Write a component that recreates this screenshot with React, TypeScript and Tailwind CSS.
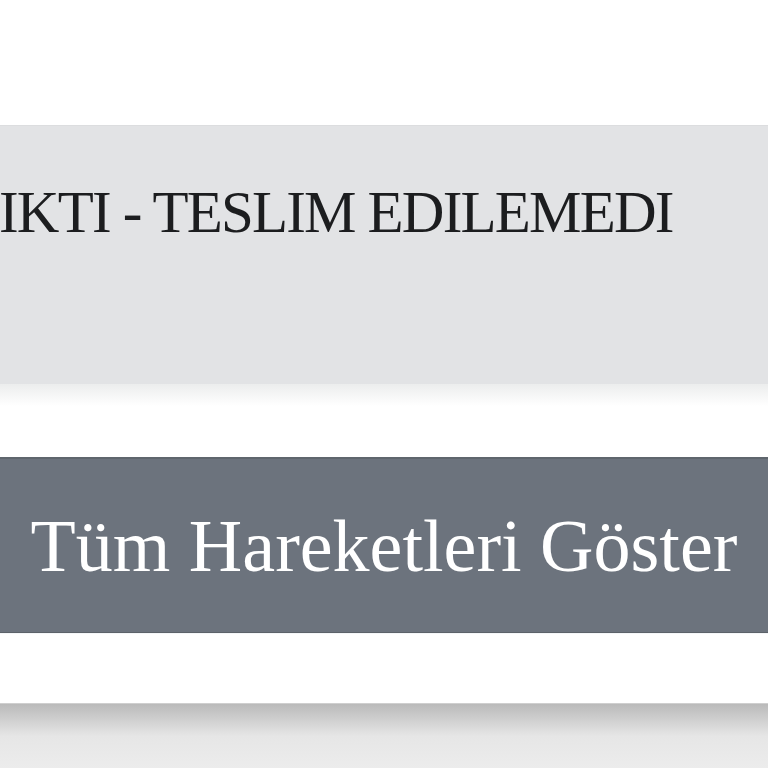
export default function App() {
  return (
    <div className="w-full h-[768px] overflow-hidden bg-white font-['Liberation_Serif',serif]">
      <div className="h-[125px]" />

      {/* Status box */}
      <div className="h-[259px] bg-[#e2e3e5] border-t border-[#dcdddf] pt-[57px] overflow-hidden whitespace-nowrap">
        <p className="text-[59px] leading-none tracking-[-1.8px] text-[#1c1d1f] -ml-[1px]">IKTI - TESLIM EDILEMEDI</p>
      </div>
      <div className="h-[22px] bg-gradient-to-b from-[#eceded] to-white" />

      <div className="h-[51px]" />

      {/* Button */}
      <button className="w-full h-[176px] flex items-center justify-center bg-[#6c737d] border-t-2 border-b border-t-[#5f666d] border-b-[#5c6269] text-white text-[74px] leading-none whitespace-nowrap">
        Tüm Hareketleri Göster
      </button>

      <div className="h-[70px] bg-white border-t border-[#f4f6f8]" />

      {/* Next section shadow */}
      <div className="h-[65px] bg-gradient-to-b from-[#bababa] via-[#e6e6e6] to-[#ececec] border-t border-[#cfcfcf]" />
    </div>
  );
}
